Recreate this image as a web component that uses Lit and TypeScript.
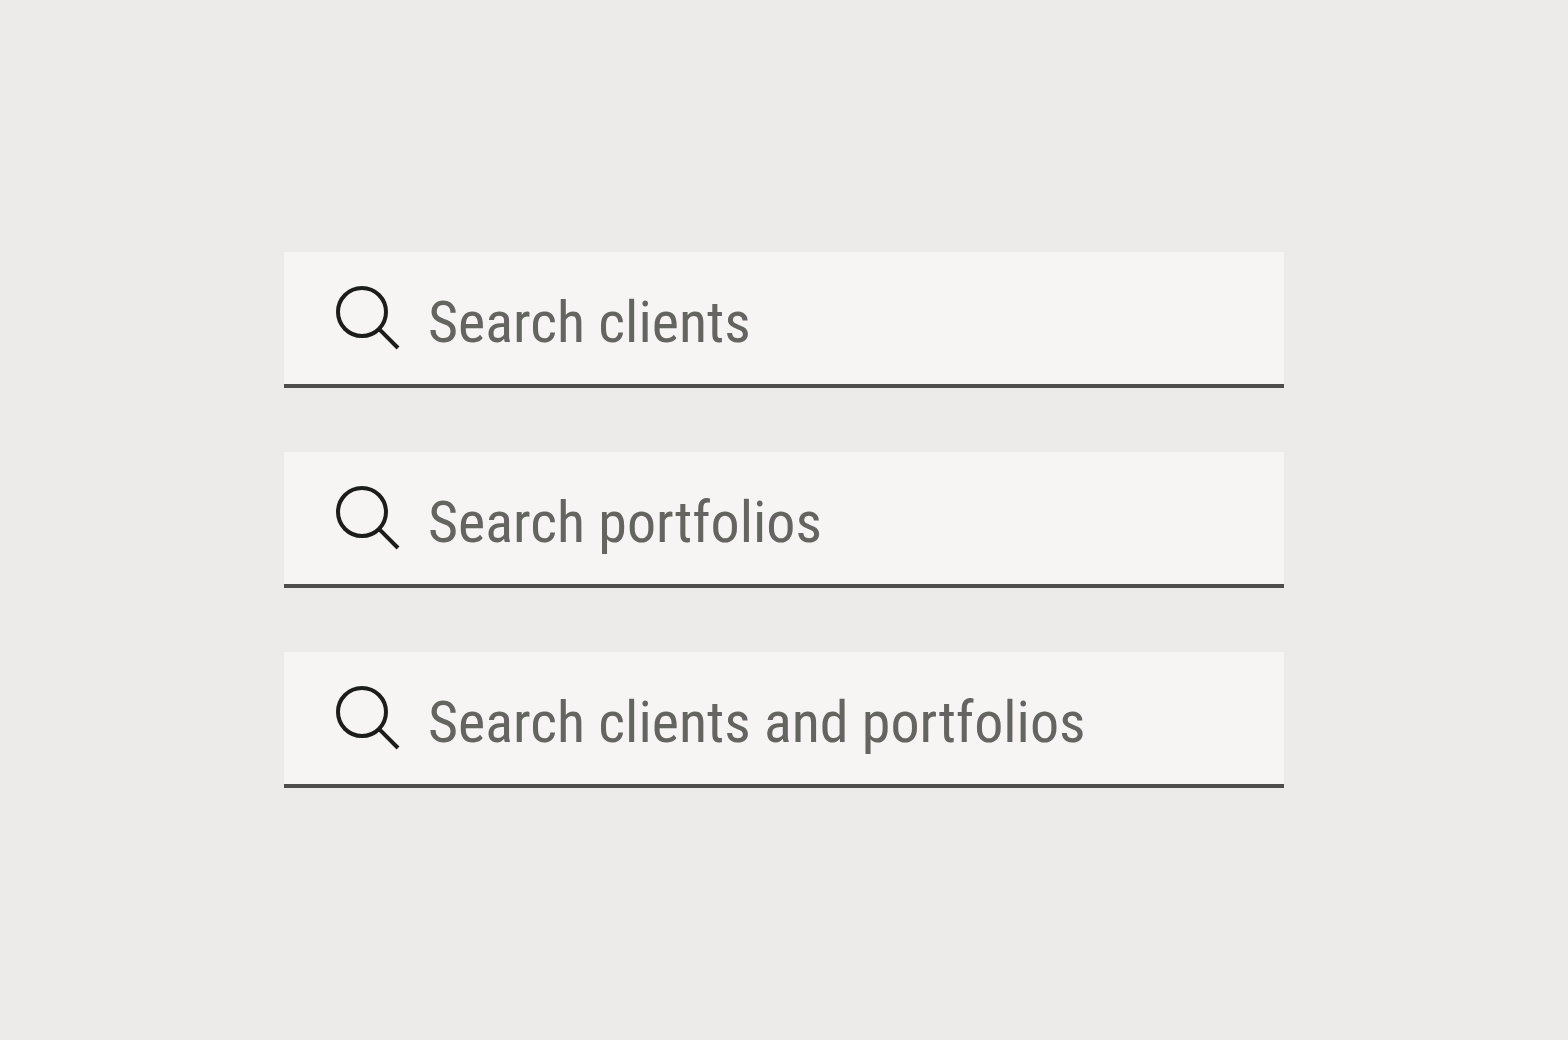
import { LitElement, html, css } from "lit";
import { customElement, property } from "lit/decorators.js";

@customElement("search-field")
class SearchField extends LitElement {
  @property() label = "";

  static styles = css`
    :host {
      display: block;
    }
    .field {
      display: flex;
      align-items: center;
      gap: 28px;
      box-sizing: border-box;
      padding: 26px 52px;
      background: #f6f5f3;
      border-bottom: 4px solid #4f4d4b;
    }
    .icon {
      flex: none;
      width: 64px;
      height: 64px;
      fill: none;
      stroke: #1c1c1c;
      stroke-width: 4;
    }
    .input {
      flex: 1;
      min-width: 0;
      box-sizing: border-box;
      height: 80px;
      padding: 8px 0 0;
      border: 0;
      outline: 0;
      background: transparent;
      color: #1c1c1c;
      font: 400 58px/72px "Roboto Condensed", "Liberation Sans", sans-serif;
    }
    .input::placeholder {
      color: #646460;
      opacity: 1;
    }
  `;

  render() {
    return html`
      <label class="field">
        <svg class="icon" viewBox="0 0 64 64" aria-hidden="true">
          <circle cx="26" cy="26" r="24" />
          <path d="M43.2 43.2 62 62" />
        </svg>
        <input class="input" type="text" placeholder=${this.label} aria-label=${this.label} />
      </label>
    `;
  }
}

@customElement("app-root")
class AppRoot extends LitElement {
  static styles = css`
    :host {
      display: block;
    }
    .page {
      display: flex;
      flex-direction: column;
      align-items: center;
      justify-content: center;
      gap: 64px;
      box-sizing: border-box;
      min-height: 100vh;
      padding: 32px;
      background: #ecebe9;
    }
    .item {
      width: 100%;
      max-width: 1000px;
    }
  `;

  private labels = ["Search clients", "Search portfolios", "Search clients and portfolios"];

  render() {
    return html`
      <main class="page">
        ${this.labels.map((label) => html`<search-field class="item" .label=${label}></search-field>`)}
      </main>
    `;
  }
}
